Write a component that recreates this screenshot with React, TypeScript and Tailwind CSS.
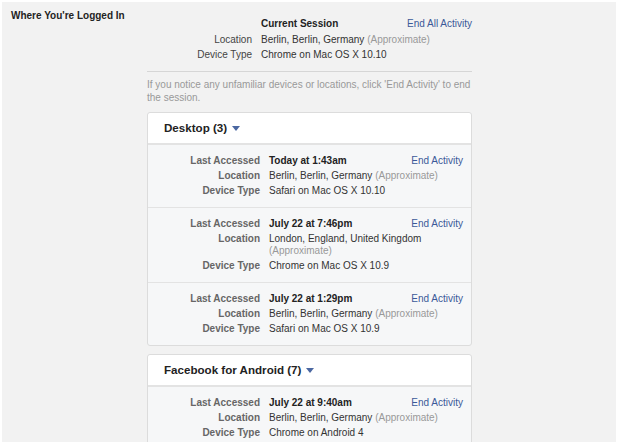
import React from 'react';

type Row = {
  when: string;
  location: string;
  device: string;
};

type Group = {
  title: string;
  rows: Row[];
};

const groups: Group[] = [
  {
    title: 'Desktop (3)',
    rows: [
      { when: 'Today at 1:43am', location: 'Berlin, Berlin, Germany', device: 'Safari on Mac OS X 10.10' },
      { when: 'July 22 at 7:46pm', location: 'London, England, United Kingdom', device: 'Chrome on Mac OS X 10.9' },
      { when: 'July 22 at 1:29pm', location: 'Berlin, Berlin, Germany', device: 'Safari on Mac OS X 10.9' },
    ],
  },
  {
    title: 'Facebook for Android (7)',
    rows: [
      { when: 'July 22 at 9:40am', location: 'Berlin, Berlin, Germany', device: 'Chrome on Android 4' },
    ],
  },
];

const Caret = () => (
  <svg width="8" height="5" viewBox="0 0 8 5" className="ml-[5px] mt-[2px]">
    <path d="M0 0h8L4 5z" fill="#4b67a1" />
  </svg>
);

const SessionRow = ({ row }: { row: Row }) => (
  <div className="grid grid-cols-[112px_1fr] gap-x-[9px] gap-y-[3px] py-[10px] pr-[8px] leading-[12px]">
    <div className="text-right font-bold text-[#666]">Last Accessed</div>
    <div className="flex justify-between">
      <span className="font-bold text-[#222]">{row.when}</span>
      <a className="text-[#3b5998]">End Activity</a>
    </div>
    <div className="text-right font-bold text-[#666]">Location</div>
    <div className="text-[#333]">
      {row.location} <span className="text-[#999]">(Approximate)</span>
    </div>
    <div className="text-right font-bold text-[#666]">Device Type</div>
    <div className="text-[#333]">{row.device}</div>
  </div>
);

const GroupCard = ({ group }: { group: Group }) => (
  <div className="mt-[8px] rounded-[3px] border border-[#dcdcdc] bg-[#f6f7f8]">
    <div className="flex h-[32px] items-center border-b-2 border-[#e3e3e3] bg-white pl-[16px] rounded-t-[3px]">
      <span className="text-[11.6px] font-bold text-[#222]">{group.title}</span>
      <Caret />
    </div>
    {group.rows.map((r, i) => (
      <div key={i} className={i > 0 ? 'border-t border-[#e3e3e3]' : ''}>
        <SessionRow row={r} />
      </div>
    ))}
  </div>
);

export default function App() {
  return (
    <div
      className="h-[444px] w-[620px] overflow-hidden bg-white pl-[2px] pt-[2px] text-[10px]"
      style={{ fontFamily: '"Liberation Sans", Arial, sans-serif' }}
    >
      <div className="flex h-[440px] w-[614px] overflow-hidden bg-[#f2f2f2]">
        <div className="w-[145px] shrink-0 pl-[9px] pt-[8px] font-bold leading-[12px] text-[#222]">
          Where You're Logged In
        </div>
        <div className="w-[325px] shrink-0 pt-[14px]">
          <div className="grid grid-cols-[105px_1fr] gap-x-[9px] leading-[15.5px]">
            <div />
            <div className="flex justify-between">
              <span className="font-bold text-[#222]">Current Session</span>
              <a className="text-[#3b5998]">End All Activity</a>
            </div>
            <div className="text-right text-[#444]">Location</div>
            <div className="text-[#333]">
              Berlin, Berlin, Germany <span className="text-[#999]">(Approximate)</span>
            </div>
            <div className="text-right text-[#444]">Device Type</div>
            <div className="text-[#333]">Chrome on Mac OS X 10.10</div>
          </div>
          <div className="mt-[8px] border-t border-[#d6d6d6]" />
          <p className="mt-[6px] leading-[13px] text-[#999]">
            If you notice any unfamiliar devices or locations, click 'End Activity' to end the session.
          </p>
          <div className="mt-[1px]">
            {groups.map((g) => (
              <GroupCard key={g.title} group={g} />
            ))}
          </div>
        </div>
      </div>
    </div>
  );
}
